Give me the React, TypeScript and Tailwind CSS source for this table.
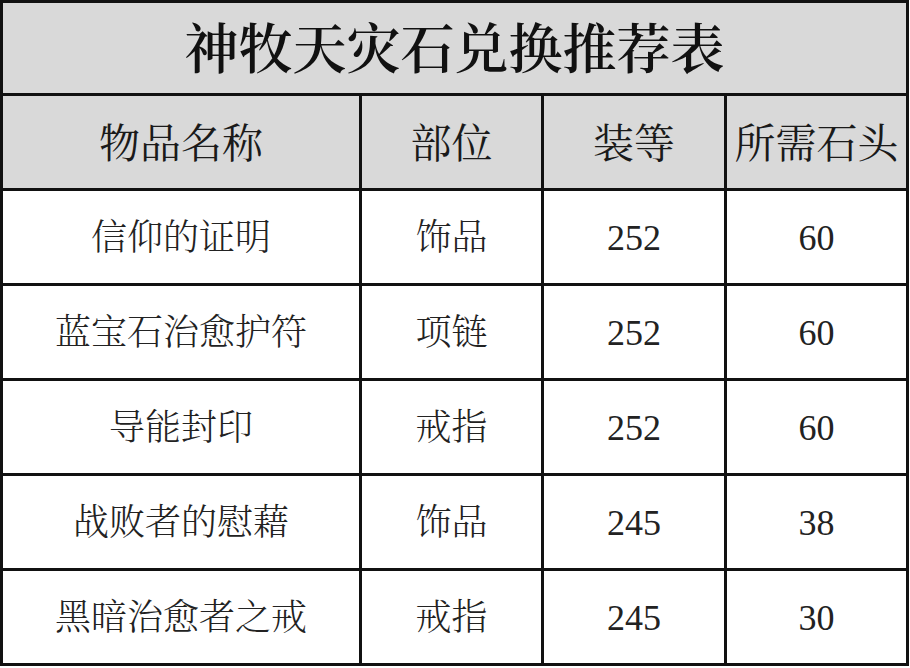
import React from "react";

const rows = [
  ["信仰的证明", "饰品", "252", "60"],
  ["蓝宝石治愈护符", "项链", "252", "60"],
  ["导能封印", "戒指", "252", "60"],
  ["战败者的慰藉", "饰品", "245", "38"],
  ["黑暗治愈者之戒", "戒指", "245", "30"],
];

const font = {
  fontFamily:
    '"Liberation Serif", "Noto Serif CJK SC", "Noto Sans CJK SC", serif',
};

export default function App() {
  return (
    <div className="w-[910px] h-[668px] bg-white" style={font}>
      <div className="w-[909px] h-[666px] bg-[#111111] p-[3px] grid grid-cols-[356px_179px_180px_179px] grid-rows-[90px_repeat(6,92px)] gap-[3px]">
        <div className="col-span-4 bg-[#d9d9d9] flex items-center justify-center text-[54px] font-semibold text-[#111] leading-none pt-[5px]">
          神牧天灾石兑换推荐表
        </div>
        {["物品名称", "部位", "装等", "所需石头"].map((h, i) => (
          <div
            key={i}
            className="bg-[#d9d9d9] flex items-center justify-center text-[41px] font-normal text-[#1a1a1a] leading-none pt-[4px]"
          >
            {h}
          </div>
        ))}
        {rows.map((r, ri) =>
          r.map((c, ci) => (
            <div
              key={`${ri}-${ci}`}
              className="bg-white flex items-center justify-center text-[36px] font-light text-[#222] leading-none pt-[2px]"
            >
              {c}
            </div>
          ))
        )}
      </div>
    </div>
  );
}
